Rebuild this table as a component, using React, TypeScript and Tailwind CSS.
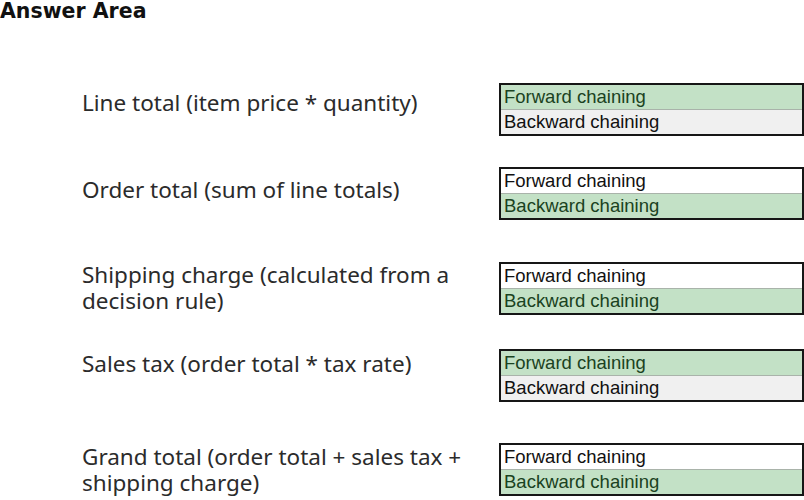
import React from 'react';

type Choice = 'forward' | 'backward';

interface AnswerRow {
  label: string[];
  choice: Choice;
  rowClass: string;
  labelClass: string;
}

const rows: AnswerRow[] = [
  { label: ['Line total (item price * quantity)'], choice: 'forward', rowClass: 'mt-[61px]', labelClass: 'mt-[7px]' },
  { label: ['Order total (sum of line totals)'], choice: 'backward', rowClass: 'mt-[31px]', labelClass: 'mt-[10px]' },
  { label: ['Shipping charge (calculated from a', 'decision rule)'], choice: 'backward', rowClass: 'mt-[42px]', labelClass: 'mt-0' },
  { label: ['Sales tax (order total * tax rate)'], choice: 'forward', rowClass: 'mt-[34px]', labelClass: 'mt-[2px]' },
  { label: ['Grand total (order total + sales tax +', 'shipping charge)'], choice: 'backward', rowClass: 'mt-[41px]', labelClass: 'mt-[1px]' },
];

const Option = ({ text, selected, muted }: { text: string; selected: boolean; muted?: boolean }) => (
  <div
    className={
      selected
        ? 'h-[24px] bg-[#c3e1c6] pl-[3px] text-[18.5px] leading-[24px] text-[#1a4221]'
        : muted
        ? 'h-[24px] bg-[#f0f0f0] pl-[3px] text-[18.5px] leading-[24px] text-[#111]'
        : 'h-[24px] bg-white pl-[3px] text-[18.5px] leading-[24px] text-[#111]'
    }
  >
    {text}
  </div>
);

const ChoiceBox = ({ choice }: { choice: Choice }) => (
  <div className="w-[305px] shrink-0 border-2 border-[#161616] font-['Liberation_Sans',Arial,sans-serif]">
    <Option text="Forward chaining" selected={choice === 'forward'} />
    <div className="h-px bg-[#a9b3aa]" />
    <Option text="Backward chaining" selected={choice === 'backward'} muted={choice === 'forward'} />
  </div>
);

export default function App() {
  return (
    <div className="w-[804px] h-[500px] overflow-hidden bg-white">
      <h1 className="h-[22px] text-[20.5px] leading-[22px] font-bold text-[#111] font-['DejaVu_Sans',Verdana,sans-serif]">
        Answer Area
      </h1>
      {rows.map((row, i) => (
        <div key={i} className={`flex items-start ${row.rowClass}`}>
          <div
            className={`w-[499px] shrink-0 pl-[82px] text-[22.5px] leading-[26px] text-[#2b2b2b] font-['Noto_Sans',Tahoma,sans-serif] ${row.labelClass}`}
          >
            {row.label.map((line) => (
              <div key={line} className="whitespace-nowrap">{line}</div>
            ))}
          </div>
          <ChoiceBox choice={row.choice} />
        </div>
      ))}
    </div>
  );
}
